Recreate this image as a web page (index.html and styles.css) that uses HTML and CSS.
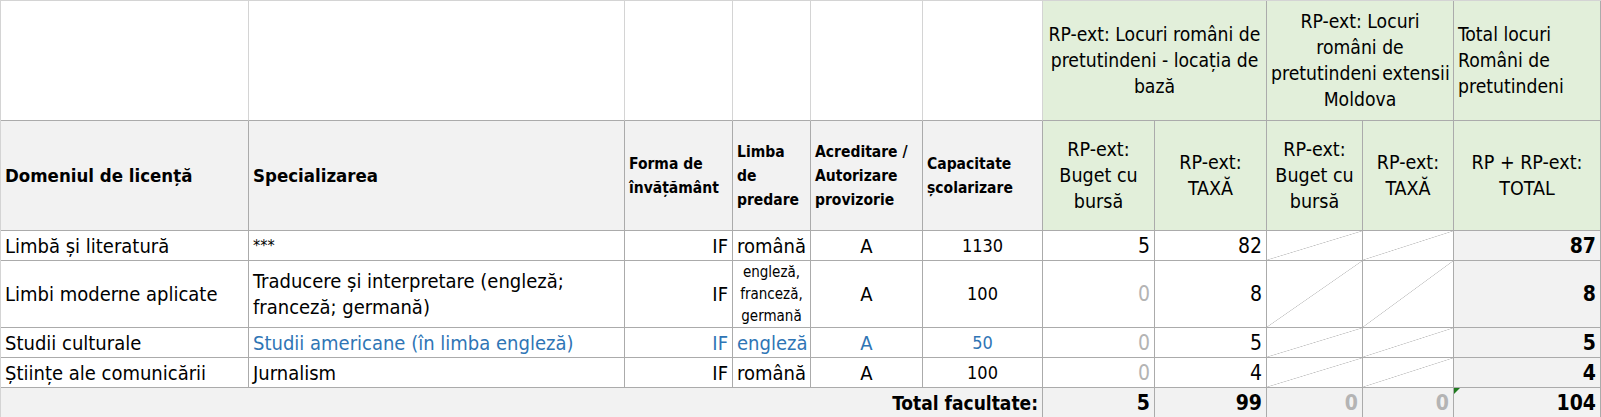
FILE: index.html
```html
<!DOCTYPE html>
<html>
<head>
  <meta charset="utf-8">
  <title>Locuri RP-ext</title>
  <link rel="stylesheet" href="styles.css">
</head>
<body>
  <table class="sheet">
    <colgroup>
      <col class="c-dom">
      <col class="c-spec">
      <col class="c-forma">
      <col class="c-limba">
      <col class="c-acred">
      <col class="c-cap">
      <col class="c-rp1">
      <col class="c-rp2">
      <col class="c-md1">
      <col class="c-md2">
      <col class="c-tot">
    </colgroup>
    <thead>
      <tr class="row-group">
        <th class="blank"></th>
        <th class="blank"></th>
        <th class="blank"></th>
        <th class="blank"></th>
        <th class="blank"></th>
        <th class="blank"></th>
        <th class="grp" colspan="2">RP-ext: Locuri români de<br>pretutindeni - locația de<br>bază</th>
        <th class="grp" colspan="2">RP-ext: Locuri<br>români de<br>pretutindeni extensii<br>Moldova</th>
        <th class="grp left">Total locuri<br>Români de<br>pretutindeni</th>
      </tr>
      <tr class="row-head">
        <th class="head big">Domeniul de licență</th>
        <th class="head big">Specializarea</th>
        <th class="head">Forma de<br>învățământ</th>
        <th class="head">Limba<br>de<br>predare</th>
        <th class="head">Acreditare /<br>Autorizare<br>provizorie</th>
        <th class="head">Capacitate<br>școlarizare</th>
        <th class="sub">RP-ext:<br>Buget cu<br>bursă</th>
        <th class="sub">RP-ext:<br>TAXĂ</th>
        <th class="sub">RP-ext:<br>Buget cu<br>bursă</th>
        <th class="sub">RP-ext:<br>TAXĂ</th>
        <th class="sub">RP + RP-ext:<br>TOTAL</th>
      </tr>
    </thead>
    <tbody>
      <tr class="row">
        <td>Limbă și literatură</td>
        <td class="stars">***</td>
        <td class="right">IF</td>
        <td class="center">română</td>
        <td class="center">A</td>
        <td class="center num-sm">1130</td>
        <td class="num">5</td>
        <td class="num">82</td>
        <td class="na"></td>
        <td class="na"></td>
        <td class="num sum">87</td>
      </tr>
      <tr class="row tall">
        <td>Limbi moderne aplicate</td>
        <td>Traducere și interpretare (engleză;<br>franceză; germană)</td>
        <td class="right">IF</td>
        <td class="center small">engleză,<br>franceză,<br>germană</td>
        <td class="center">A</td>
        <td class="center num-sm">100</td>
        <td class="num zero">0</td>
        <td class="num">8</td>
        <td class="na"></td>
        <td class="na"></td>
        <td class="num sum">8</td>
      </tr>
      <tr class="row link">
        <td class="plain">Studii culturale</td>
        <td>Studii americane (în limba engleză)</td>
        <td class="right">IF</td>
        <td class="center">engleză</td>
        <td class="center">A</td>
        <td class="center num-sm">50</td>
        <td class="num zero">0</td>
        <td class="num plain">5</td>
        <td class="na"></td>
        <td class="na"></td>
        <td class="num sum plain">5</td>
      </tr>
      <tr class="row">
        <td>Științe ale comunicării</td>
        <td>Jurnalism</td>
        <td class="right">IF</td>
        <td class="center">română</td>
        <td class="center">A</td>
        <td class="center num-sm">100</td>
        <td class="num zero">0</td>
        <td class="num">4</td>
        <td class="na"></td>
        <td class="na"></td>
        <td class="num sum">4</td>
      </tr>
      <tr class="row total">
        <td class="right label" colspan="6">Total facultate:</td>
        <td class="num">5</td>
        <td class="num">99</td>
        <td class="num zero">0</td>
        <td class="num zero">0</td>
        <td class="num flagged">104</td>
      </tr>
    </tbody>
  </table>
</body>
</html>
```

FILE: styles.css
```css
body {
  margin: 0;
  background: #fff;
  color: #000;
  font-family: "DejaVu Sans Condensed", "DejaVu Sans", sans-serif;
  font-stretch: condensed;
}

.sheet {
  border-collapse: separate;
  border-spacing: 0;
  table-layout: fixed;
  width: 1601px;
  border-top: 1px solid #d4d4d4;
  border-left: 1px solid #d4d4d4;
}

.c-dom { width: 248px; }
.c-spec { width: 376px; }
.c-forma { width: 108px; }
.c-limba { width: 78px; }
.c-acred { width: 112px; }
.c-cap { width: 120px; }
.c-rp1 { width: 112px; }
.c-rp2 { width: 112px; }
.c-md1 { width: 96px; }
.c-md2 { width: 91px; }
.c-tot { width: 147px; }

.sheet th,
.sheet td {
  border-right: 1px solid #ababab;
  border-bottom: 1px solid #ababab;
  padding: 0 4px;
  overflow: hidden;
  white-space: nowrap;
  vertical-align: middle;
  text-align: left;
}

/* header rows */
.row-group { height: 120px; }
.row-head { height: 110px; }

.blank {
  background: #fff;
  border-right-color: #d4d4d4 !important;
}

.grp {
  background: #e2efda;
  font-size: 19.2px;
  font-weight: normal;
  line-height: 26px;
  text-align: center !important;
}

.grp.left { text-align: left !important; }

.head {
  background: #f2f2f2;
  font-size: 15.5px;
  font-weight: bold;
  line-height: 24px;
}

.head.big { font-size: 18.5px; }

.sub {
  background: #e2efda;
  font-size: 19.5px;
  font-weight: normal;
  line-height: 26px;
  text-align: center !important;
}

/* body rows */
.row {
  height: 30px;
  font-size: 20px;
}

.row.tall { height: 66px; }

.row td { line-height: 26px; }

.right { text-align: right !important; }
.center { text-align: center !important; }

.small {
  font-size: 15px;
  line-height: 22px !important;
}

.num-sm { font-size: 18px; }

.num {
  text-align: right !important;
  font-size: 21px;
}

.stars {
  font-size: 16px;
  vertical-align: top !important;
  padding-top: 2px !important;
}

.zero { color: #b4b4b4; }

.sum {
  background: #f2f2f2;
  font-weight: bold;
}

.link td { color: #2f75b5; }
.link td.plain { color: #000; }
.link td.zero { color: #b4b4b4; }

.na {
  background: linear-gradient(to bottom right, transparent calc(50% - 0.6px), #c4c4c4 50%, transparent calc(50% + 0.6px));
}

.total td {
  background: #f2f2f2;
  font-weight: bold;
}

.total .label { font-size: 19px; }

.flagged { position: relative; }

.flagged::before {
  content: "";
  position: absolute;
  top: 0;
  left: 0;
  border-top: 6px solid #1e7a1e;
  border-right: 6px solid transparent;
}
```
